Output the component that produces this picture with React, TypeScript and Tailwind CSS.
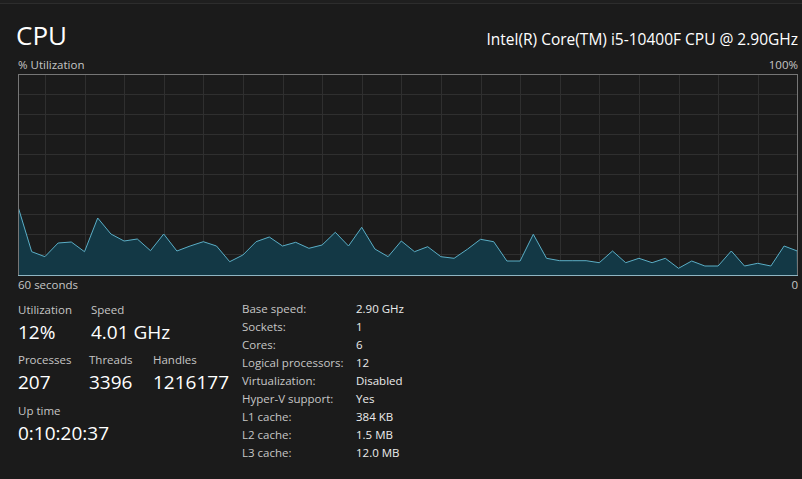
import React from "react";

const ys = [
  208.3, 251.7, 256.7, 243, 242, 251.7, 218, 234, 241, 239,
  250.7, 234, 251, 246, 241.7, 246, 261.7, 255, 241.7, 237,
  246, 242.3, 248.3, 245, 232.3, 246, 227.3, 249, 256.7, 241,
  251.7, 246.7, 256.7, 258.3, 249.3, 239.3, 241.7, 261, 261, 234.3,
  258.3, 260.7, 260.7, 260.7, 262.7, 251, 262.7, 258.3, 262.7, 258.3,
  268.3, 261, 266, 266, 251, 266, 263.3, 266, 246, 251,
];

function Chart() {
  const pts = ys
    .map((y, i) => `${(i * 13.2 + 0.5).toFixed(1)},${(y - 74).toFixed(1)}`)
    .join(" ");
  const poly = `0.5,201.5 ${pts} 779.5,201.5`;
  const hLines = Array.from({ length: 9 }, (_, k) => 20.5 + 20 * k);
  const vLines = Array.from({ length: 19 }, (_, k) => Math.round(27 + 39.6 * k) + 0.5);
  return (
    <svg width="780" height="202" viewBox="0 0 780 202" className="block">
      {hLines.map((y) => (
        <line key={"h" + y} x1="0" x2="780" y1={y} y2={y} stroke="#2f2f2f" strokeWidth="1" />
      ))}
      {vLines.map((x) => (
        <line key={"v" + x} x1={x} x2={x} y1="0" y2="202" stroke="#2f2f2f" strokeWidth="1" />
      ))}
      <polygon points={poly} fill="#133845" stroke="#5aaec6" strokeWidth="1" strokeLinejoin="round" />
      <rect x="0.5" y="0.5" width="779" height="201" fill="none" stroke="#767676" strokeWidth="1" />
      <line x1="0" x2="780" y1="201.5" y2="201.5" stroke="#8fb5c2" strokeWidth="1" />
    </svg>
  );
}

function Stat({ label, value, w }: { label: string; value: string; w?: string }) {
  return (
    <div className={w}>
      <div className="text-[11.5px] leading-[16px] text-[#c6c6c6]">{label}</div>
      <div className="mt-[1px] text-[19px] leading-[26px] text-white">{value}</div>
    </div>
  );
}

const specs: [string, string][] = [
  ["Base speed:", "2.90 GHz"],
  ["Sockets:", "1"],
  ["Cores:", "6"],
  ["Logical processors:", "12"],
  ["Virtualization:", "Disabled"],
  ["Hyper-V support:", "Yes"],
  ["L1 cache:", "384 KB"],
  ["L2 cache:", "1.5 MB"],
  ["L3 cache:", "12.0 MB"],
];

export default function App() {
  return (
    <div className="w-[802px] h-[479px] overflow-hidden bg-[#1b1b1b] text-white font-['Open_Sans',sans-serif]">
      <div className="h-[4px] bg-[#1f1f1f] border-b border-[#2d2d2d]" />
      <div className="pl-[18px] pr-[4px]">
        <div className="mt-[13px] flex items-baseline justify-between">
          <div className="-ml-[2px] text-[26px] leading-[36px] text-white">CPU</div>
          <div className="text-[15.5px] leading-[20px] text-white">Intel(R) Core(TM) i5-10400F CPU @ 2.90GHz</div>
        </div>
        <div className="mt-[4px] flex justify-between text-[11.5px] leading-[16px] text-[#c6c6c6]">
          <span>% Utilization</span>
          <span>100%</span>
        </div>
        <div className="mt-[1px]">
          <Chart />
        </div>
        <div className="mt-[1px] flex justify-between text-[11.5px] leading-[16px] text-[#c6c6c6]">
          <span>60 seconds</span>
          <span>0</span>
        </div>
        <div className="mt-[9px] flex">
          <div className="w-[224px]">
            <div className="flex">
              <Stat w="w-[73px]" label="Utilization" value="12%" />
              <Stat label="Speed" value="4.01 GHz" />
            </div>
            <div className="mt-[7px] flex">
              <Stat w="w-[71px]" label="Processes" value="207" />
              <Stat w="w-[64px]" label="Threads" value="3396" />
              <Stat label="Handles" value="1216177" />
            </div>
            <div className="mt-[8px]">
              <Stat label="Up time" value="0:10:20:37" />
            </div>
          </div>
          <div className="-mt-[2px] grid grid-cols-[114px_auto] text-[11.5px] leading-[18px]">
            {specs.map(([k, v]) => (
              <React.Fragment key={k}>
                <div className="text-[#c6c6c6]">{k}</div>
                <div className="text-[#ececec]">{v}</div>
              </React.Fragment>
            ))}
          </div>
        </div>
      </div>
    </div>
  );
}
